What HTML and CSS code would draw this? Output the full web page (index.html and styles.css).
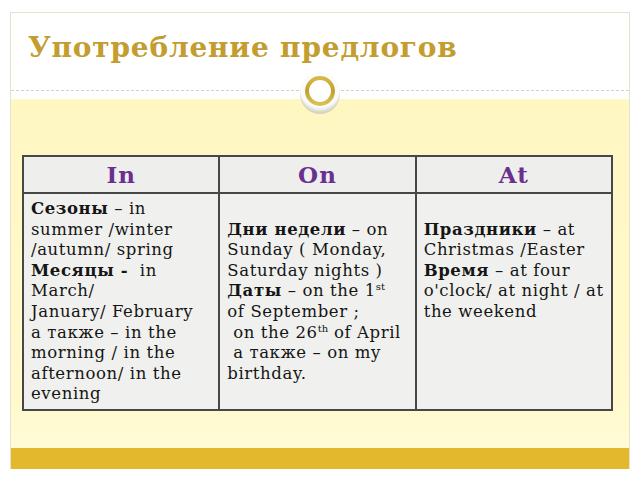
FILE: index.html
```html
<!DOCTYPE html>
<html lang="ru">
<head>
<meta charset="utf-8">
<title>Употребление предлогов</title>
<link rel="stylesheet" href="styles.css">
</head>
<body>
<div class="slide">
  <header class="head">
    <h1 class="title">Употребление предлогов</h1>
  </header>
  <main class="content">
    <table class="grid">
      <thead>
        <tr><th>In</th><th>On</th><th>At</th></tr>
      </thead>
      <tbody>
        <tr>
          <td><b>Сезоны</b> – in<br>summer /winter<br>/autumn/ spring<br><b>Месяцы -</b>&nbsp; in<br>March/<br>January/ February<br>а также – in the<br>morning / in the<br>afternoon/ in the<br>evening</td>
          <td><br><b>Дни недели</b> – on<br>Sunday ( Monday,<br>Saturday nights )<br><b>Даты</b> – on the 1<sup>st</sup><br>of September ;<br>&nbsp;on the 26<sup>th</sup> of April<br>&nbsp;а также – on my<br>birthday.</td>
          <td><br><b>Праздники</b> – at<br>Christmas /Easter<br><b>Время</b> – at four<br>o'clock/ at night / at<br>the weekend</td>
        </tr>
      </tbody>
    </table>
  </main>
  <footer class="band"></footer>
  <svg class="ornament" width="48" height="48" viewBox="0 0 48 48" aria-hidden="true">
    <defs>
      <radialGradient id="disk" cx="50%" cy="40%" r="60%">
        <stop offset="0%" stop-color="#ffffff"/>
        <stop offset="80%" stop-color="#fbfbf8"/>
        <stop offset="100%" stop-color="#d8d8d4"/>
      </radialGradient>
      <linearGradient id="ring" x1="0" y1="0" x2="0" y2="1">
        <stop offset="0%" stop-color="#d6b84a"/>
        <stop offset="50%" stop-color="#c2a12c"/>
        <stop offset="100%" stop-color="#d9bf55"/>
      </linearGradient>
    </defs>
    <circle cx="24" cy="26" r="20" fill="#b9b9b4" opacity="0.55"/>
    <circle cx="24" cy="24" r="20" fill="url(#disk)"/>
    <circle cx="24" cy="23" r="13" fill="#ffffff" stroke="url(#ring)" stroke-width="4"/>
  </svg>
</div>
</body>
</html>
```
FILE: styles.css
```css
html, body {
  margin: 0;
  padding: 0;
  background: #ffffff;
}

.slide {
  position: relative;
  box-sizing: border-box;
  width: 620px;
  height: 457px;
  margin: 12px 0 0 10px;
  border: 1px solid #e9e1cb;
  border-bottom: none;
  background: #ffffff;
  display: flex;
  flex-direction: column;
}

.head {
  height: 77px;
  border-bottom: 1px dashed #d9d2bd;
  margin-bottom: 8px;
  flex: none;
}

.title {
  margin: 0;
  padding: 18px 0 0 17px;
  font-family: "DejaVu Serif", serif;
  font-weight: bold;
  font-size: 28px;
  line-height: 34px;
  color: #c39d2f;
  letter-spacing: 0.8px;
}

.content {
  flex: none;
  height: 349px;
  background: linear-gradient(#fff7c2, #fff9cc 85%, #fffbd6);
  padding: 56px 0 0 11px;
  box-sizing: border-box;
}

.grid {
  border-collapse: collapse;
  width: 591px;
  table-layout: fixed;
  font-family: "DejaVu Serif", serif;
  color: #151515;
}

.grid th,
.grid td {
  border: 2px solid #474747;
}

.grid th {
  height: 35px;
  padding: 0;
  background: #eeefec;
  font-size: 23px;
  font-weight: bold;
  letter-spacing: 1px;
  color: #6b2f8f;
  text-align: center;
  vertical-align: middle;
}

.grid td {
  background: #f0f1ee;
  padding: 5px 2px 4px 7px;
  font-size: 16.5px;
  letter-spacing: 0.6px;
  line-height: 20.6px;
  vertical-align: top;
  white-space: nowrap;
}

.grid sup {
  font-size: 10px;
  letter-spacing: 0;
  line-height: 0;
  vertical-align: 6px;
}

.band {
  flex: none;
  height: 22px;
  background: #e3b82c;
}

.ornament {
  position: absolute;
  left: 285px;
  top: 55px;
}
```
